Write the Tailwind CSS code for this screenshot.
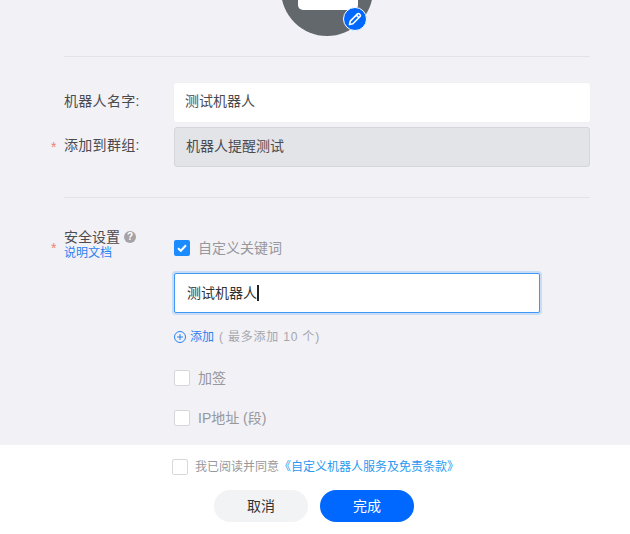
<!DOCTYPE html>
<html lang="zh-CN">
<head>
  <meta charset="UTF-8" />
  <title>机器人设置</title>
  <script src="https://cdn.jsdelivr.net/npm/@tailwindcss/browser@4"></script>
</head>
<body class="w-[630px] h-[534px] overflow-hidden bg-white font-['Liberation_Sans','Noto_Sans_CJK_SC',sans-serif] text-[14px] text-[#4b4b4f]">
  <main class="h-[445px] bg-[#f1f1f6] overflow-hidden pl-[64px] pr-[40px]">
    <!-- avatar -->
    <div class="h-[57px] border-b border-[#e2e2e7] flex justify-center">
      <div class="relative w-[92px] h-[92px] mt-[-56px] rounded-full bg-[#63686d] shrink-0">
        <div class="absolute left-[17px] top-[29px] w-[60px] h-[37px] bg-white rounded-b-[5px]"></div>
        <div class="absolute left-[62px] top-[63px] w-[24px] h-[24px] rounded-full bg-[#0068ff] border border-white flex items-center justify-center">
          <svg width="16" height="16" viewBox="0 0 16 16" fill="none" stroke="white" stroke-width="1.6" stroke-linejoin="round"><path d="M2.5 13.5l.8-3.4 7.2-7.2a1.3 1.3 0 0 1 1.8 0l.8.8a1.3 1.3 0 0 1 0 1.8l-7.2 7.2z"/><path d="M9.3 4.1l2.6 2.6"/></svg>
        </div>
      </div>
    </div>

    <!-- name + group -->
    <div class="h-[141px] border-b border-[#e2e2e7] pt-[26px]">
      <div class="flex items-center h-[39px]">
        <label class="w-[110px] tracking-[0.3px] pb-[3px]">机器人名字:</label>
        <div class="flex-1 h-[39px] bg-white rounded-[2px] pl-[11px] pb-[2px] flex items-center shadow-[0_0_1px_rgba(0,0,0,0.08)]">测试机器人</div>
      </div>
      <div class="flex items-center h-[40px] mt-[5px]">
        <label class="relative w-[110px] tracking-[0.3px] pb-[3px]"><span class="absolute left-[-13px] top-[2px] text-[#f0826e]">*</span>添加到群组:</label>
        <div class="flex-1 h-[40px] bg-[#e3e4e8] border border-[#d5d6db] rounded-[3px] pl-[11px] pb-[2px] flex items-center">机器人提醒测试</div>
      </div>
    </div>

    <!-- security -->
    <div class="flex pt-[30px]">
      <div class="w-[110px] shrink-0 relative">
        <span class="absolute left-[-13px] top-[10px] text-[#f0826e]">*</span>
        <div class="flex items-center gap-[4px] h-[18px] leading-[18px]">安全设置
          <span class="w-[12px] h-[12px] rounded-full bg-[#a3a3a8] text-white text-[10px] font-bold leading-[12px] text-center">?</span>
        </div>
        <a class="block text-[12px] leading-[14px] text-[#2a82f0]">说明文档</a>
      </div>
      <div class="w-[366px]">
        <div class="flex items-center gap-[8px] h-[20px] mt-[10px] text-[#97979c]">
          <span class="w-[16px] h-[16px] rounded-[2px] bg-[#1a8cff] flex items-center justify-center">
            <svg width="12" height="12" viewBox="0 0 12 12" fill="none" stroke="white" stroke-width="2"><path d="M2 6.2l2.8 2.6L10 3.2"/></svg>
          </span>
          自定义关键词
        </div>
        <div class="mt-[15px] h-[40px] bg-white border border-[#3f98f5] rounded-[2px] shadow-[0_0_0_2px_rgba(42,140,245,0.2)] pl-[12px] flex items-center text-[#333]">测试机器人<span class="w-[2px] h-[16px] bg-[#222]"></span></div>
        <div class="flex items-center mt-[15px] h-[18px] text-[12px]">
          <svg width="12" height="12" viewBox="0 0 12 12" fill="none" stroke="#2a82f0" class="mr-[4px]"><circle cx="6" cy="6" r="5.5"/><path d="M3 6h6M6 3v6"/></svg>
          <span class="text-[#2a82f0]">添加</span>
          <span class="ml-[5px] text-[#a6a6ab] tracking-[0.8px]">( 最多添加 10 个)</span>
        </div>
        <div class="flex items-center gap-[8px] h-[20px] mt-[22px] text-[#97979c]">
          <span class="w-[16px] h-[16px] rounded-[2px] bg-white border border-[#d8d8dc]"></span>加签
        </div>
        <div class="flex items-center gap-[8px] h-[20px] mt-[20px] text-[#97979c]">
          <span class="w-[16px] h-[16px] rounded-[2px] bg-white border border-[#d8d8dc]"></span>IP地址 (段)
        </div>
      </div>
    </div>
  </main>

  <!-- footer -->
  <footer class="h-[89px] bg-white pt-[12px]">
    <div class="flex items-center h-[20px] pl-[172px] text-[12px]">
      <span class="w-[16px] h-[16px] rounded-[2px] bg-white border border-[#d8d8dc] mr-[7px]"></span>
      <span class="text-[#97979c]">我已阅读并同意</span>
      <a class="text-[#2a9af0]">《自定义机器人服务及免责条款》</a>
    </div>
    <div class="flex gap-[12px] pl-[214px] mt-[13px]">
      <button class="w-[94px] h-[32px] rounded-full bg-[#f2f3f5] text-[14px] text-[#333]">取消</button>
      <button class="w-[94px] h-[32px] rounded-full bg-[#0068ff] text-[14px] text-white">完成</button>
    </div>
  </footer>
</body>
</html>
